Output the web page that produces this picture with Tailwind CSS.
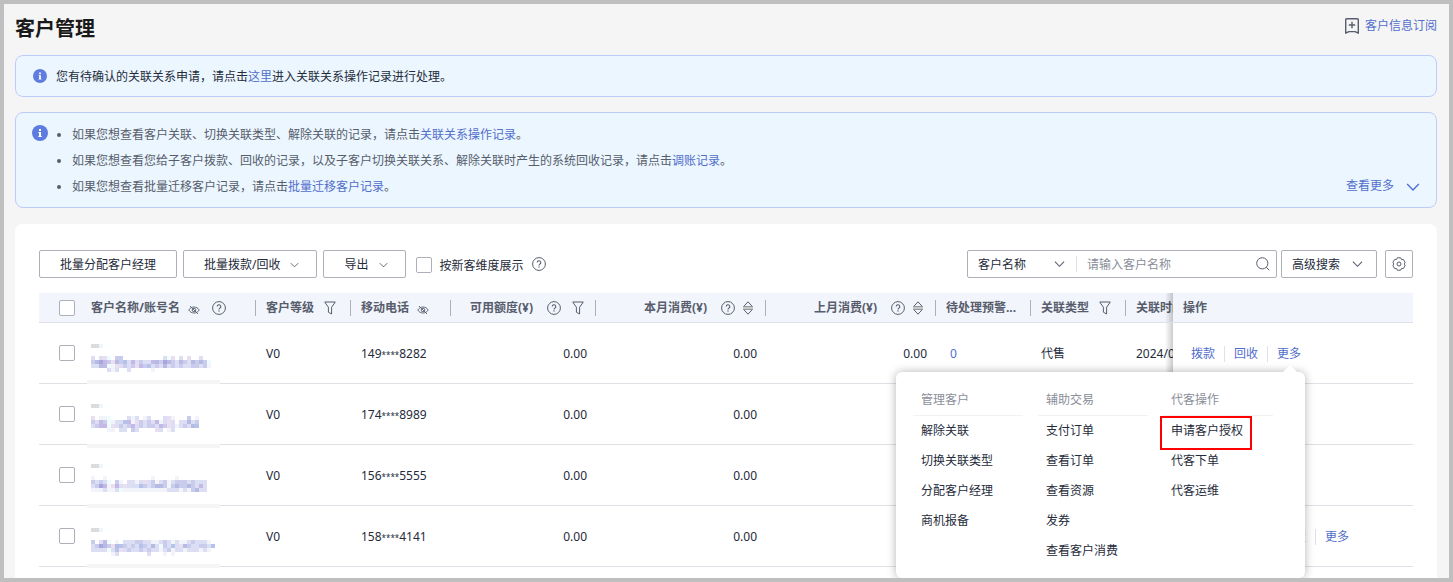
<!DOCTYPE html>
<html lang="zh-CN">
<head>
  <meta charset="UTF-8">
  <meta name="viewport" content="width=device-width, initial-scale=1.0">
  <title>客户管理</title>
  <script src="https://cdn.jsdelivr.net/npm/@tailwindcss/browser@4"></script>
</head>
<body class="flex flex-col min-h-screen border-4 border-[#bfbfbf] bg-[#f5f5f5] pr-3 pl-[11px] text-xs text-[#252b3a] font-['Noto_Sans','Noto_Sans_CJK_SC',sans-serif]">

  <!-- Icons -->
  <svg class="hidden">
    <symbol id="help" viewBox="0 0 14 14"><g fill="none" stroke="currentColor"><circle cx="7" cy="7" r="6.4"/><path d="M5.2 5.6a1.8 1.8 0 1 1 2.7 1.5c-.6.4-.9.7-.9 1.3" stroke-width="1.1"/></g><circle cx="7" cy="10" r=".7" fill="currentColor"/></symbol>
    <symbol id="filter" viewBox="0 0 12 14"><path d="M.7 1h10.6L7.6 6.2V13L4.4 11.2V6.2z" fill="none" stroke="currentColor" stroke-linejoin="round"/></symbol>
    <symbol id="sort" viewBox="0 0 10 14"><path d="M5 .8 9.3 5.5H.7zM5 13.2.7 8.5h8.6z" fill="none" stroke="currentColor" stroke-linejoin="round"/><path d="M0 5.5h10M0 7h10M0 8.5h10" stroke="#999"/></symbol>
    <symbol id="hidden-eye" viewBox="0 0 12 10"><g fill="none" stroke="currentColor" stroke-width=".9"><path d="M.8 5C3 1 9 1 11.2 5 9 9 3 9 .8 5z"/><circle cx="6" cy="5" r="1.8"/><path d="M2 1l8 8"/></g></symbol>
    <symbol id="down" viewBox="0 0 12 8"><path d="M1 1.5 6 6.5l5-5" fill="none" stroke="currentColor" stroke-width="1.2"/></symbol>
    <symbol id="info" viewBox="0 0 16 16"><circle cx="8" cy="8" r="8" fill="#5e7ce0"/><path d="M7 4h2v2H7zM6.4 7H9v4h.7v1H6.4v-1H7V8h-.6z" fill="#fff"/></symbol>
  </svg>

  <header class="flex h-[51px] shrink-0 items-start justify-between">
    <h1 class="text-xl leading-[50px] font-bold text-[#191919]">客户管理</h1>
    <a href="#" class="flex h-11 items-center gap-[5px] text-[#526ecc]">
      <svg class="size-4 text-[#575d6c]" viewBox="0 0 16 16" fill="none" stroke="currentColor" stroke-width="1.4"><path d="M2.5.8h11q.8 0 .8.8v13.6L11 13.6H5L1.7 15.2V1.6q0-.8.8-.8z" stroke-linejoin="round"/><path d="M8 3.8v6.4M4.8 7h6.4"/></svg>
      客户信息订阅
    </a>
  </header>

  <!-- Notices -->
  <section class="flex h-[42px] shrink-0 items-center rounded-lg border border-[#beccfa] bg-[#ebf6ff] px-[17px]">
    <svg class="mr-[9px] size-[14px]"><use href="#info"/></svg>
    <p class="pt-[2px]">您有待确认的关联关系申请，请点击<a href="#" class="text-[#526ecc]">这里</a>进入关联关系操作记录进行处理。</p>
  </section>

  <section class="mt-[15px] flex shrink-0 rounded-lg border border-[#beccfa] bg-[#ebf6ff] px-4 pt-[9px] pb-[7px] text-[#575d6c]">
    <svg class="mt-[3px] size-4"><use href="#info"/></svg>
    <ul class="list-disc pl-6 leading-[26px]">
      <li>如果您想查看客户关联、切换关联类型、解除关联的记录，请点击<a href="#" class="text-[#526ecc]">关联关系操作记录</a>。</li>
      <li>如果您想查看您给子客户拨款、回收的记录，以及子客户切换关联关系、解除关联时产生的系统回收记录，请点击<a href="#" class="text-[#526ecc]">调账记录</a>。</li>
      <li>如果您想查看批量迁移客户记录，请点击<a href="#" class="text-[#526ecc]">批量迁移客户记录</a>。</li>
    </ul>
    <button class="mb-[6px] ml-auto flex items-center gap-3 self-end text-[#526ecc]">查看更多 <svg class="mt-px h-[10px] w-[14px]"><use href="#down"/></svg></button>
  </section>

  <main class="mt-4 grow rounded-t-lg bg-white px-6 pt-[26px]">
    <!-- Toolbar -->
    <div class="flex h-7 items-center">
      <div class="flex gap-[6px]">
        <button class="h-7 rounded-xs border border-[#adb0b8] px-5 pt-[2px]">批量分配客户经理</button>
        <button class="flex h-7 items-center gap-[10px] rounded-xs border border-[#adb0b8] pt-[2px] pr-[17px] pl-5">批量拨款/回收 <svg class="h-[6px] w-[9px] text-[#575d6c]"><use href="#down"/></svg></button>
        <button class="flex h-7 items-center gap-[10px] rounded-xs border border-[#adb0b8] pt-[2px] pr-[17px] pl-5">导出 <svg class="h-[6px] w-[9px] text-[#575d6c]"><use href="#down"/></svg></button>
      </div>
      <label class="ml-[10px] flex items-center gap-2 pt-[2px]"><input type="checkbox" class="size-4 appearance-none rounded-xs border border-[#adb0b8] bg-white"><span class="pt-[2px]">按新客维度展示</span></label>
      <svg class="ml-2 size-[14px] text-[#575d6c]"><use href="#help"/></svg>

      <div class="ml-auto flex h-7 w-[310px] items-center rounded-xs border border-[#adb0b8]">
        <div class="relative flex items-center">
          <select aria-label="搜索类型" class="w-[108px] appearance-none pt-[2px] pl-[10px] outline-none"><option>客户名称</option></select>
          <svg class="pointer-events-none absolute right-[11px] h-2 w-[11px] text-[#575d6c]"><use href="#down"/></svg>
        </div>
        <input type="text" aria-label="搜索内容" placeholder="请输入客户名称" class="h-4 min-w-0 grow border-l border-[#dfe1e6] pt-[2px] pl-[10px] outline-none placeholder:text-[#8a8e99]">
        <button aria-label="搜索" class="mr-[6px]"><svg class="size-[14px] text-[#575d6c]" viewBox="0 0 14 14" fill="none" stroke="currentColor"><circle cx="6.3" cy="6.3" r="5.6"/><path d="M10.3 10.3 13.3 13.3"/></svg></button>
      </div>
      <button class="ml-1 flex h-7 w-24 items-center justify-between rounded-xs border border-[#adb0b8] pr-[13px] pl-[10px]"><span class="pt-[2px]">高级搜索</span> <svg class="h-2 w-[11px] text-[#575d6c]"><use href="#down"/></svg></button>
      <button aria-label="设置" class="ml-2 flex size-7 items-center justify-center rounded-xs border border-[#adb0b8]"><svg class="size-[14px] text-[#575d6c]" viewBox="0 0 14 14" fill="none" stroke="currentColor" stroke-linejoin="round"><path d="M5.3.8h3.4l.7 1.6 2 .1 1.7 2.8-.9 1.7.9 1.7-1.7 2.8-2 .1-.7 1.6H5.3l-.7-1.6-2-.1L.9 8.7 1.8 7 .9 5.3l1.7-2.8 2-.1z"/><circle cx="7" cy="7" r="2"/></svg></button>
    </div>

    <!-- Customer table -->
    <div class="relative mt-[15px]">
      <div class="overflow-hidden pb-[11px]">
        <table class="w-full table-fixed border-separate border-spacing-0 whitespace-nowrap">
          <thead class="text-left text-[#575d6c]">
            <tr class="[&>th]:h-[30px] [&>th]:border-b [&>th]:border-[#dfe1e6] [&>th]:bg-[#f2f5fc] [&>th]:p-0 [&>th]:font-bold">
              <th class="w-12"><input type="checkbox" aria-label="全选" class="ml-5 block size-4 appearance-none rounded-xs border border-[#adb0b8] bg-white"></th>
              <th class="w-[169px]"><div class="flex items-center pl-1">客户名称/账号名<svg class="mt-1 ml-2 h-[10px] w-3"><use href="#hidden-eye"/></svg><svg class="ml-3 size-[14px]"><use href="#help"/></svg><span class="ml-auto h-4 w-px bg-[#adb0b8]"></span></div></th>
              <th class="w-[95px]"><div class="flex items-center pl-[10px]">客户等级<svg class="ml-[10px] h-[14px] w-3"><use href="#filter"/></svg><span class="ml-auto h-4 w-px bg-[#adb0b8]"></span></div></th>
              <th class="w-[100px]"><div class="flex items-center pl-[10px]">移动电话<svg class="mt-1 ml-2 h-[10px] w-3"><use href="#hidden-eye"/></svg><span class="ml-auto h-4 w-px bg-[#adb0b8]"></span></div></th>
              <th class="w-[145px]"><div class="flex items-center justify-end">可用额度(¥)<svg class="ml-[14px] size-[14px]"><use href="#help"/></svg><svg class="mr-[11px] ml-[11px] h-[14px] w-3"><use href="#filter"/></svg><span class="h-4 w-px bg-[#adb0b8]"></span></div></th>
              <th class="w-[170px]"><div class="flex items-center justify-end">本月消费(¥)<svg class="ml-[14px] size-[14px]"><use href="#help"/></svg><svg class="mr-3 ml-2 h-[14px] w-[10px]"><use href="#sort"/></svg><span class="h-4 w-px bg-[#adb0b8]"></span></div></th>
              <th class="w-[170px]"><div class="flex items-center justify-end">上月消费(¥)<svg class="ml-[14px] size-[14px]"><use href="#help"/></svg><svg class="mr-3 ml-2 h-[14px] w-[10px]"><use href="#sort"/></svg><span class="h-4 w-px bg-[#adb0b8]"></span></div></th>
              <th class="w-[95px]"><div class="flex items-center pl-[10px]">待处理预警...<span class="ml-auto h-4 w-px bg-[#adb0b8]"></span></div></th>
              <th class="w-[95px]"><div class="flex items-center pl-[10px]">关联类型<svg class="ml-[10px] h-[14px] w-3"><use href="#filter"/></svg><span class="ml-auto h-4 w-px bg-[#adb0b8]"></span></div></th>
              <th class="overflow-hidden"><div class="pl-[10px]">关联时间</div></th>
              <th class="relative w-60 before:absolute before:inset-y-0 before:right-full before:w-2 before:bg-linear-to-l before:from-black/20 before:to-transparent"><div class="pl-[10px]">操作</div></th>
            </tr>
          </thead>
          <tbody id="rows"></tbody>
        </table>
      </div>

      <!-- More menu -->
      <div class="absolute top-[79px] right-[108px] flex gap-[15px] rounded-md bg-white pt-3 pr-8 pb-3 pl-[17px] shadow-[0_0_10px_rgba(0,0,0,0.3)]">
        <span class="absolute -top-[5px] right-[10px] size-[10px] rotate-45 bg-white"></span>
        <div class="w-[110px]">
          <h2 class="border-b border-[#f2f2f3] pl-2 leading-[31px] text-[#8a8e99]">管理客户</h2>
          <ul class="pl-2 leading-[30px]">
            <li><a href="#">解除关联</a></li>
            <li><a href="#">切换关联类型</a></li>
            <li><a href="#">分配客户经理</a></li>
            <li><a href="#">商机报备</a></li>
          </ul>
        </div>
        <div class="w-[110px]">
          <h2 class="border-b border-[#f2f2f3] pl-2 leading-[31px] text-[#8a8e99]">辅助交易</h2>
          <ul class="pl-2 leading-[30px]">
            <li><a href="#">支付订单</a></li>
            <li><a href="#">查看订单</a></li>
            <li><a href="#">查看资源</a></li>
            <li><a href="#">发券</a></li>
            <li><a href="#">查看客户消费</a></li>
          </ul>
        </div>
        <div class="w-[110px]">
          <h2 class="border-b border-[#f2f2f3] pl-2 leading-[31px] text-[#8a8e99]">代客操作</h2>
          <ul class="pl-2 leading-[30px]">
            <li class="relative"><a href="#">申请客户授权</a><span class="pointer-events-none absolute top-0 -left-[11px] h-[34px] w-[92px] border-2 border-[#ff0000]"></span></li>
            <li><a href="#">代客下单</a></li>
            <li><a href="#">代客运维</a></li>
          </ul>
        </div>
      </div>
    </div>
  </main>

  <script>
    // Masked account names: one letter per 4px cell
    const shades = { a: '#f3f3fa', b: '#dcdff3', c: '#c9cdeb', d: '#b6bbe3', e: '#a9a6de', p: '#eadff0', q: '#eefcfe', r: '#c4b8e6', s: '#b4c3ea' };
    const customers = [
      { phone: ['149', '8282'], tag: 21, name: 33, strip: 57, ops: ['拨款', '回收', '更多'], mask: [
        'b.bpq.cc..........bqp.b.p..b.',
        'cdercpdcsbrbcbbrdcedcbdcbdcdcq',
        'bbdrqapbcbcprcsbcbdbcbcbbccbca',
        '....bab..b.....a..............'] },
      { phone: ['174', '8989'], tag: 20, name: 32, strip: 60, ops: ['拨款', '回收', '更多'], mask: [
        'p.aaq....bab.ab...bpa...c.a',
        'cbrcqabbsrapcbcbrabpb.bbdbc',
        'bcrrqpbcbcrbcbccbrcpbabcbds',
        '....aa.bb.cb....pb.ab......'] },
      { phone: ['156', '5555'], tag: 19, name: 31, strip: 59, ops: ['拨款', '回收', '更多'], mask: [
        'a..a...........a.....a.......',
        'cbcbq.ca.bbabpbcabcabcccbcbbb',
        'bceraprbpbbbscbcddcacdccdcbrb',
        'aaabaabqaaaaaaaaaaabbbabacdbb'] },
      { phone: ['158', '4141'], tag: 22, name: 34, strip: 58, ops: ['额度设置', '关联设置', '更多'], mask: [
        'c.brq.a.bbbccbbaabcbabaabcbbba',
        'bcedcpdscbcbscbdbqcbsbpdcbbccbs',
        'bbbbqbspbcbbcbcbbabcabbabbbaba',
        '.....ab.......b...a.a.........'] },
    ];
    document.getElementById('rows').innerHTML = customers.map((c) => `
      <tr class="[&>td]:h-[61px] [&>td]:border-b [&>td]:border-[#dfe1e6] [&>td]:leading-4 [&>td:not(:first-child)]:pt-[2px]">
        <td><input type="checkbox" aria-label="选择客户 ${c.phone[0]}" class="ml-5 block size-4 appearance-none rounded-xs border border-[#adb0b8] bg-white"></td>
        <td class="relative"><svg class="absolute top-0 left-0 h-[65px] w-[133px]" shape-rendering="crispEdges">
          <rect x="0" y="${c.strip}" width="133" height="4" fill="#f5f5f5"/>
          <rect x="4" y="${c.tag}" width="8" height="4" fill="#dcdcdc"/><rect x="12" y="${c.tag}" width="4" height="4" fill="#eef8fc"/>
          ${c.mask.map((line, y) => [...line].map((s, x) => shades[s] ? `<rect x="${4 + x * 4}" y="${c.name + y * 4}" width="4" height="4" fill="${shades[s]}"/>` : '').join('')).join('')}
        </svg></td>
        <td><div class="pl-[10px]">V0</div></td>
        <td><div class="pl-[10px]">${c.phone[0]}<span class="text-[8px]">****</span>${c.phone[1]}</div></td>
        <td><div class="pr-[9px] text-right">0.00</div></td>
        <td><div class="pr-[9px] text-right">0.00</div></td>
        <td><div class="pr-[9px] text-right">0.00</div></td>
        <td><a href="#" class="pl-[14px] text-[#526ecc]">0</a></td>
        <td><div class="pl-[10px]">代售</div></td>
        <td class="overflow-hidden"><div class="pl-[10px]">2024/08/12</div></td>
        <td class="relative bg-white before:absolute before:inset-y-0 before:right-full before:w-2 before:bg-linear-to-l before:from-black/20 before:to-transparent"><div class="flex items-center pl-[18px] text-[#526ecc]">
          ${c.ops.map((op) => `<button>${op}</button>`).join('<span class="mr-[9px] ml-[9px] h-4 w-px bg-[#dfe1e6]"></span>')}
        </div></td>
      </tr>`).join('');
  </script>
</body>
</html>
